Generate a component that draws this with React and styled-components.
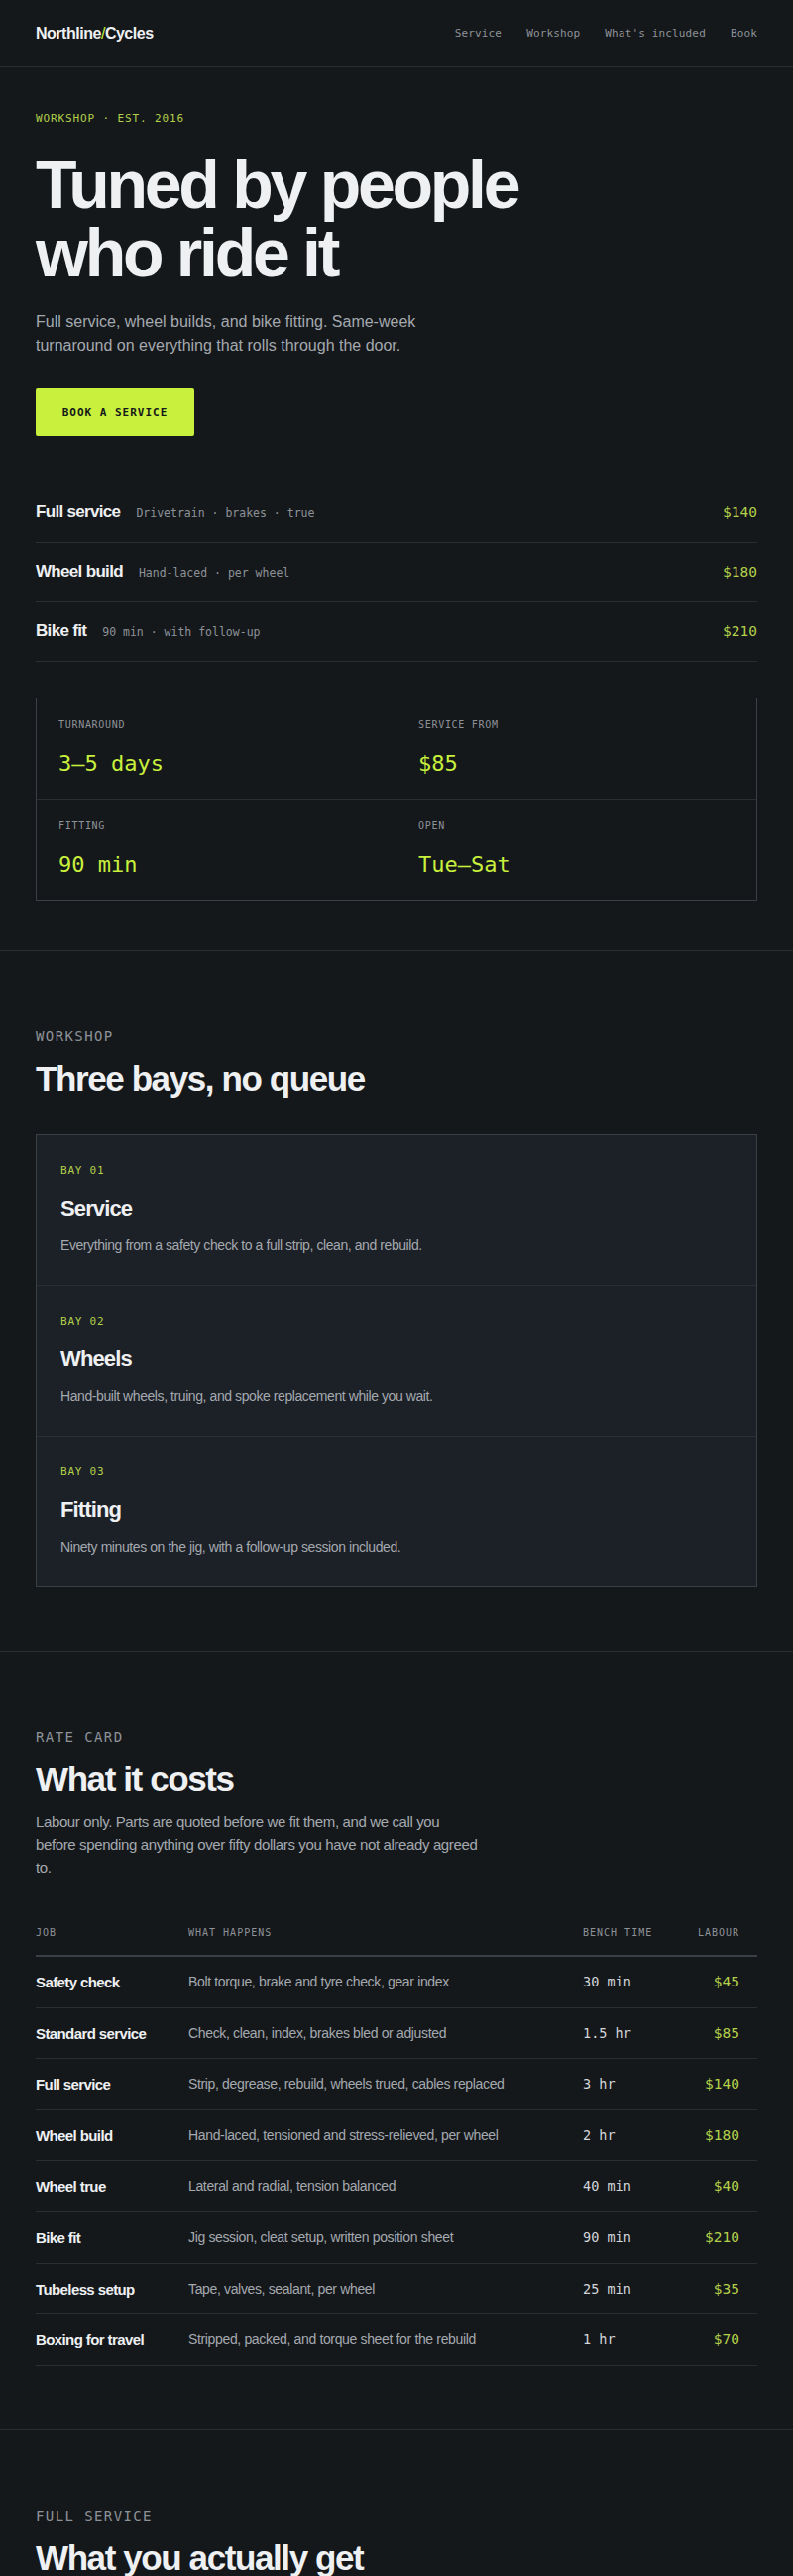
import React from 'react'
import styled, { createGlobalStyle } from 'styled-components'

const sans = `"Liberation Sans", Arial, sans-serif`
const mono = `"DejaVu Sans Mono", "Liberation Mono", monospace`

const c = {
  bg: '#15181b',
  panel: '#1c2027',
  line: '#2a2e33',
  lineStrong: '#3a3f45',
  text: '#eef0f2',
  body: '#a4a9af',
  muted: '#8d9298',
  lime: '#c8f03c',
  limeDim: '#b3d04a',
}

const GlobalStyle = createGlobalStyle`
  * { box-sizing: border-box; }
  body {
    margin: 0;
    background: ${c.bg};
    color: ${c.text};
    font-family: ${sans};
  }
`

const Page = styled.div`
  background: ${c.bg};
  min-height: 2600px;
`

/* top bar */
const Header = styled.header`
  display: flex;
  align-items: center;
  justify-content: space-between;
  height: 68px;
  padding: 0 36px;
  border-bottom: 1px solid ${c.line};
`

const Logo = styled.div`
  font-family: ${sans};
  font-weight: 700;
  font-size: 16px;
  letter-spacing: -0.03em;
  color: ${c.text};

  span {
    color: ${c.lime};
    font-weight: 400;
  }
`

const Nav = styled.nav`
  display: flex;
  gap: 25px;
`

const NavLink = styled.a`
  font-family: ${mono};
  font-size: 11px;
  letter-spacing: 0.15px;
  color: ${c.muted};
  text-decoration: none;
`

/* sections */
const Section = styled.section`
  padding: ${(p) => p.$pad || '76px 36px 64px'};
  border-bottom: ${(p) => (p.$open ? 'none' : `1px solid ${c.line}`)};
`

const Eyebrow = styled.div`
  font-family: ${mono};
  font-size: ${(p) => (p.$small ? '11px' : '14px')};
  line-height: ${(p) => (p.$small ? '16px' : '20px')};
  letter-spacing: ${(p) => (p.$small ? '0.08em' : '0.1em')};
  color: ${(p) => (p.$accent ? c.limeDim : c.muted)};
  text-transform: uppercase;
`

const Headline = styled.h1`
  margin: 24px 0 0;
  font-size: 68px;
  line-height: 69px;
  font-weight: 700;
  letter-spacing: -0.048em;
  color: ${c.text};
`

const Lead = styled.p`
  margin: ${(p) => p.$margin || '23px 0 0'};
  max-width: ${(p) => p.$width || '400px'};
  font-size: ${(p) => p.$size || '16px'};
  line-height: ${(p) => p.$lh || '24px'};
  letter-spacing: ${(p) => p.$ls || '0'};
  color: ${c.body};
`

const Button = styled.a`
  display: inline-flex;
  align-items: center;
  justify-content: center;
  margin-top: 31px;
  height: 48px;
  width: 160px;
  background: ${c.lime};
  color: #15181b;
  font-family: ${mono};
  font-size: 11px;
  letter-spacing: 1px;
  font-weight: 700;
  text-decoration: none;
  border-radius: 2px;
`

const SectionTitle = styled.h2`
  margin: 13px 0 0;
  font-size: 35px;
  line-height: 40px;
  font-weight: 700;
  letter-spacing: -0.04em;
  color: ${c.text};
`

/* hero price list */
const PriceList = styled.ul`
  list-style: none;
  margin: 47px 0 0;
  padding: 0;
  border-top: 1px solid ${c.lineStrong};
`

const PriceRow = styled.li`
  display: flex;
  align-items: baseline;
  gap: 16px;
  height: 60px;
  padding-top: 19px;
  border-bottom: 1px solid ${c.line};
`

const PriceName = styled.span`
  font-size: 17px;
  font-weight: 700;
  letter-spacing: -0.04em;
  color: ${c.text};
`

const PriceMeta = styled.span`
  flex: 1;
  font-family: ${mono};
  font-size: 11.5px;
  color: ${c.muted};
`

const Price = styled.span`
  font-family: ${mono};
  font-size: 14.5px;
  color: ${c.limeDim};
`

/* hero stats */
const Stats = styled.div`
  display: grid;
  grid-template-columns: 1fr 1fr;
  margin-top: 36px;
  border: 1px solid ${c.lineStrong};
`

const Stat = styled.div`
  display: flex;
  flex-direction: column;
  gap: 18px;
  padding: 20px 22px 21px;
  border-right: ${(p) => (p.$right ? 'none' : `1px solid ${c.line}`)};
  border-bottom: ${(p) => (p.$bottom ? 'none' : `1px solid ${c.line}`)};
`

const StatLabel = styled.div`
  font-family: ${mono};
  font-size: 10px;
  line-height: 14px;
  letter-spacing: 0.07em;
  color: ${c.muted};
`

const StatValue = styled.div`
  font-family: ${mono};
  font-size: 22px;
  line-height: 28px;
  color: ${c.lime};
`

/* workshop bays */
const Bays = styled.div`
  margin-top: 36px;
  background: ${c.panel};
  border: 1px solid ${c.lineStrong};
`

const Bay = styled.div`
  padding: 28px 24px 29px;
  border-bottom: ${(p) => (p.$last ? 'none' : `1px solid ${c.line}`)};
`

const BayTag = styled.div`
  font-family: ${mono};
  font-size: 11px;
  line-height: 16px;
  letter-spacing: 0.07em;
  color: ${c.limeDim};
`

const BayTitle = styled.h3`
  margin: 16px 0 0;
  font-size: 22px;
  line-height: 28px;
  font-weight: 700;
  letter-spacing: -0.04em;
  color: ${c.text};
`

const BayText = styled.p`
  margin: 12px 0 0;
  font-size: 14px;
  line-height: 22px;
  letter-spacing: -0.03em;
  color: ${c.body};
`

/* rate card table */
const Table = styled.div`
  margin-top: 47px;
`

const Row = styled.div`
  display: grid;
  grid-template-columns: 154px 1fr 96px 80px;
  align-items: center;
  padding: ${(p) => (p.$head ? '0 0 14px' : '15px 0 14.6px')};
  border-bottom: ${(p) => (p.$head ? `2px solid ${c.lineStrong}` : `1px solid ${c.line}`)};
`

const HeadCell = styled.div`
  font-family: ${mono};
  font-size: 10px;
  line-height: 16px;
  letter-spacing: 0.1em;
  color: ${c.muted};
  text-align: ${(p) => (p.$right ? 'right' : 'left')};
  padding-right: ${(p) => (p.$right ? '18px' : '0')};
`

const JobCell = styled.div`
  font-size: 15px;
  line-height: 21px;
  font-weight: 700;
  letter-spacing: -0.04em;
  color: ${c.text};
`

const WhatCell = styled.div`
  font-size: 14px;
  line-height: 21px;
  letter-spacing: -0.025em;
  color: ${c.body};
`

const TimeCell = styled.div`
  font-family: ${mono};
  font-size: 13.5px;
  line-height: 21px;
  color: #d2d6da;
`

const CostCell = styled.div`
  font-family: ${mono};
  font-size: 14.5px;
  line-height: 21px;
  color: ${c.limeDim};
  text-align: right;
  padding-right: 18px;
`

const services = [
  { name: 'Full service', meta: 'Drivetrain · brakes · true', price: '$140' },
  { name: 'Wheel build', meta: 'Hand-laced · per wheel', price: '$180' },
  { name: 'Bike fit', meta: '90 min · with follow-up', price: '$210' },
]

const stats = [
  { label: 'TURNAROUND', value: '3–5 days' },
  { label: 'SERVICE FROM', value: '$85' },
  { label: 'FITTING', value: '90 min' },
  { label: 'OPEN', value: 'Tue–Sat' },
]

const bays = [
  { tag: 'BAY 01', title: 'Service', text: 'Everything from a safety check to a full strip, clean, and rebuild.' },
  { tag: 'BAY 02', title: 'Wheels', text: 'Hand-built wheels, truing, and spoke replacement while you wait.' },
  { tag: 'BAY 03', title: 'Fitting', text: 'Ninety minutes on the jig, with a follow-up session included.' },
]

const rates = [
  ['Safety check', 'Bolt torque, brake and tyre check, gear index', '30 min', '$45'],
  ['Standard service', 'Check, clean, index, brakes bled or adjusted', '1.5 hr', '$85'],
  ['Full service', 'Strip, degrease, rebuild, wheels trued, cables replaced', '3 hr', '$140'],
  ['Wheel build', 'Hand-laced, tensioned and stress-relieved, per wheel', '2 hr', '$180'],
  ['Wheel true', 'Lateral and radial, tension balanced', '40 min', '$40'],
  ['Bike fit', 'Jig session, cleat setup, written position sheet', '90 min', '$210'],
  ['Tubeless setup', 'Tape, valves, sealant, per wheel', '25 min', '$35'],
  ['Boxing for travel', 'Stripped, packed, and torque sheet for the rebuild', '1 hr', '$70'],
]

export default function App() {
  return (
    <Page>
      <GlobalStyle />
      <Header>
        <Logo>
          Northline<span>/</span>Cycles
        </Logo>
        <Nav>
          <NavLink href="#service">Service</NavLink>
          <NavLink href="#workshop">Workshop</NavLink>
          <NavLink href="#included">What's included</NavLink>
          <NavLink href="#book">Book</NavLink>
        </Nav>
      </Header>

      <Section $pad="44px 36px 50px">
        <Eyebrow $small $accent>WORKSHOP · EST. 2016</Eyebrow>
        <Headline>
          Tuned by people
          <br />
          who ride it
        </Headline>
        <Lead>
          Full service, wheel builds, and bike fitting. Same-week turnaround on everything that rolls through the door.
        </Lead>
        <Button href="#book">BOOK A SERVICE</Button>

        <PriceList>
          {services.map((s) => (
            <PriceRow key={s.name}>
              <PriceName>{s.name}</PriceName>
              <PriceMeta>{s.meta}</PriceMeta>
              <Price>{s.price}</Price>
            </PriceRow>
          ))}
        </PriceList>

        <Stats>
          {stats.map((s, i) => (
            <Stat key={s.label} $right={i % 2 === 1} $bottom={i >= 2}>
              <StatLabel>{s.label}</StatLabel>
              <StatValue>{s.value}</StatValue>
            </Stat>
          ))}
        </Stats>
      </Section>

      <Section id="workshop">
        <Eyebrow>WORKSHOP</Eyebrow>
        <SectionTitle>Three bays, no queue</SectionTitle>
        <Bays>
          {bays.map((b, i) => (
            <Bay key={b.tag} $last={i === bays.length - 1}>
              <BayTag>{b.tag}</BayTag>
              <BayTitle>{b.title}</BayTitle>
              <BayText>{b.text}</BayText>
            </Bay>
          ))}
        </Bays>
      </Section>

      <Section id="service">
        <Eyebrow>RATE CARD</Eyebrow>
        <SectionTitle>What it costs</SectionTitle>
        <Lead $margin="11px 0 0" $width="450px" $size="15px" $lh="23px" $ls="-0.025em">
          Labour only. Parts are quoted before we fit them, and we call you before spending anything over fifty dollars you have not already agreed to.
        </Lead>
        <Table>
          <Row $head>
            <HeadCell>JOB</HeadCell>
            <HeadCell>WHAT HAPPENS</HeadCell>
            <HeadCell>BENCH TIME</HeadCell>
            <HeadCell $right>LABOUR</HeadCell>
          </Row>
          {rates.map(([job, what, time, cost]) => (
            <Row key={job}>
              <JobCell>{job}</JobCell>
              <WhatCell>{what}</WhatCell>
              <TimeCell>{time}</TimeCell>
              <CostCell>{cost}</CostCell>
            </Row>
          ))}
        </Table>
      </Section>

      <Section id="included" $open>
        <Eyebrow>FULL SERVICE</Eyebrow>
        <SectionTitle>What you actually get</SectionTitle>
      </Section>
    </Page>
  )
}
